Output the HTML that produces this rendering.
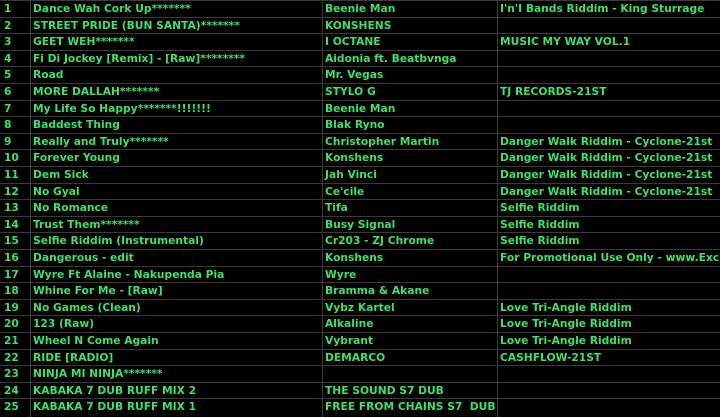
<!DOCTYPE html><html><head><style>
body{margin:0;background:#000;width:720px;height:417px;overflow:hidden;position:relative;font-family:"DejaVu Sans",Verdana,sans-serif;font-size:10.7px;font-weight:bold;color:#3ee06a}
.r{position:absolute;left:0;width:720px;height:16.6px;border-top:1px solid #3a3a3a;box-sizing:border-box}
.r span{position:absolute;top:1px;white-space:nowrap;line-height:14px}
.a{left:4px}.b{left:33px}.c{left:325px}.d{left:500px}
.v{position:absolute;top:0;height:417px;width:1px;background:#3a3a3a}
</style></head><body>
<div class="v" style="left:30px"></div><div class="v" style="left:322px"></div><div class="v" style="left:497px"></div>
<div class="r" style="top:0px"><span class="a">1</span><span class="b">Dance Wah Cork Up*******</span><span class="c">Beenie Man</span><span class="d">I'n'I Bands Riddim - King Sturrage</span></div>
<div class="r" style="top:16.6px"><span class="a">2</span><span class="b">STREET PRIDE (BUN SANTA)*******</span><span class="c">KONSHENS</span></div>
<div class="r" style="top:33.2px"><span class="a">3</span><span class="b">GEET WEH*******</span><span class="c">I OCTANE</span><span class="d">MUSIC MY WAY VOL.1</span></div>
<div class="r" style="top:49.8px"><span class="a">4</span><span class="b">Fi Di Jockey [Remix] - [Raw]********</span><span class="c">Aidonia ft. Beatbvnga</span></div>
<div class="r" style="top:66.4px"><span class="a">5</span><span class="b">Road</span><span class="c">Mr. Vegas</span></div>
<div class="r" style="top:83px"><span class="a">6</span><span class="b">MORE DALLAH*******</span><span class="c">STYLO G</span><span class="d">TJ RECORDS-21ST</span></div>
<div class="r" style="top:99.6px"><span class="a">7</span><span class="b">My Life So Happy*******!!!!!!!</span><span class="c">Beenie Man</span></div>
<div class="r" style="top:116.2px"><span class="a">8</span><span class="b">Baddest Thing</span><span class="c">Blak Ryno</span></div>
<div class="r" style="top:132.8px"><span class="a">9</span><span class="b">Really and Truly*******</span><span class="c">Christopher Martin</span><span class="d">Danger Walk Riddim - Cyclone-21st</span></div>
<div class="r" style="top:149.4px"><span class="a">10</span><span class="b">Forever Young</span><span class="c">Konshens</span><span class="d">Danger Walk Riddim - Cyclone-21st</span></div>
<div class="r" style="top:166px"><span class="a">11</span><span class="b">Dem Sick</span><span class="c">Jah Vinci</span><span class="d">Danger Walk Riddim - Cyclone-21st</span></div>
<div class="r" style="top:182.6px"><span class="a">12</span><span class="b">No Gyal</span><span class="c">Ce'cile</span><span class="d">Danger Walk Riddim - Cyclone-21st</span></div>
<div class="r" style="top:199.2px"><span class="a">13</span><span class="b">No Romance</span><span class="c">Tifa</span><span class="d">Selfie Riddim</span></div>
<div class="r" style="top:215.8px"><span class="a">14</span><span class="b">Trust Them*******</span><span class="c">Busy Signal</span><span class="d">Selfie Riddim</span></div>
<div class="r" style="top:232.4px"><span class="a">15</span><span class="b">Selfie Riddim (Instrumental)</span><span class="c">Cr203 - ZJ Chrome</span><span class="d">Selfie Riddim</span></div>
<div class="r" style="top:249px"><span class="a">16</span><span class="b">Dangerous - edit</span><span class="c">Konshens</span><span class="d">For Promotional Use Only - www.Exclu</span></div>
<div class="r" style="top:265.6px"><span class="a">17</span><span class="b">Wyre Ft Alaine - Nakupenda Pia</span><span class="c">Wyre</span></div>
<div class="r" style="top:282.2px"><span class="a">18</span><span class="b">Whine For Me - [Raw]</span><span class="c">Bramma &amp; Akane</span></div>
<div class="r" style="top:298.8px"><span class="a">19</span><span class="b">No Games (Clean)</span><span class="c">Vybz Kartel</span><span class="d">Love Tri-Angle Riddim</span></div>
<div class="r" style="top:315.4px"><span class="a">20</span><span class="b">123 (Raw)</span><span class="c">Alkaline</span><span class="d">Love Tri-Angle Riddim</span></div>
<div class="r" style="top:332px"><span class="a">21</span><span class="b">Wheel N Come Again</span><span class="c">Vybrant</span><span class="d">Love Tri-Angle Riddim</span></div>
<div class="r" style="top:348.6px"><span class="a">22</span><span class="b">RIDE [RADIO]</span><span class="c">DEMARCO</span><span class="d">CASHFLOW-21ST</span></div>
<div class="r" style="top:365.2px"><span class="a">23</span><span class="b">NINJA MI NINJA*******</span></div>
<div class="r" style="top:381.8px"><span class="a">24</span><span class="b">KABAKA 7 DUB RUFF MIX 2</span><span class="c">THE SOUND S7 DUB</span></div>
<div class="r" style="top:398.4px"><span class="a">25</span><span class="b">KABAKA 7 DUB RUFF MIX 1</span><span class="c">FREE FROM CHAINS S7&nbsp; DUB</span></div>
</body></html>
